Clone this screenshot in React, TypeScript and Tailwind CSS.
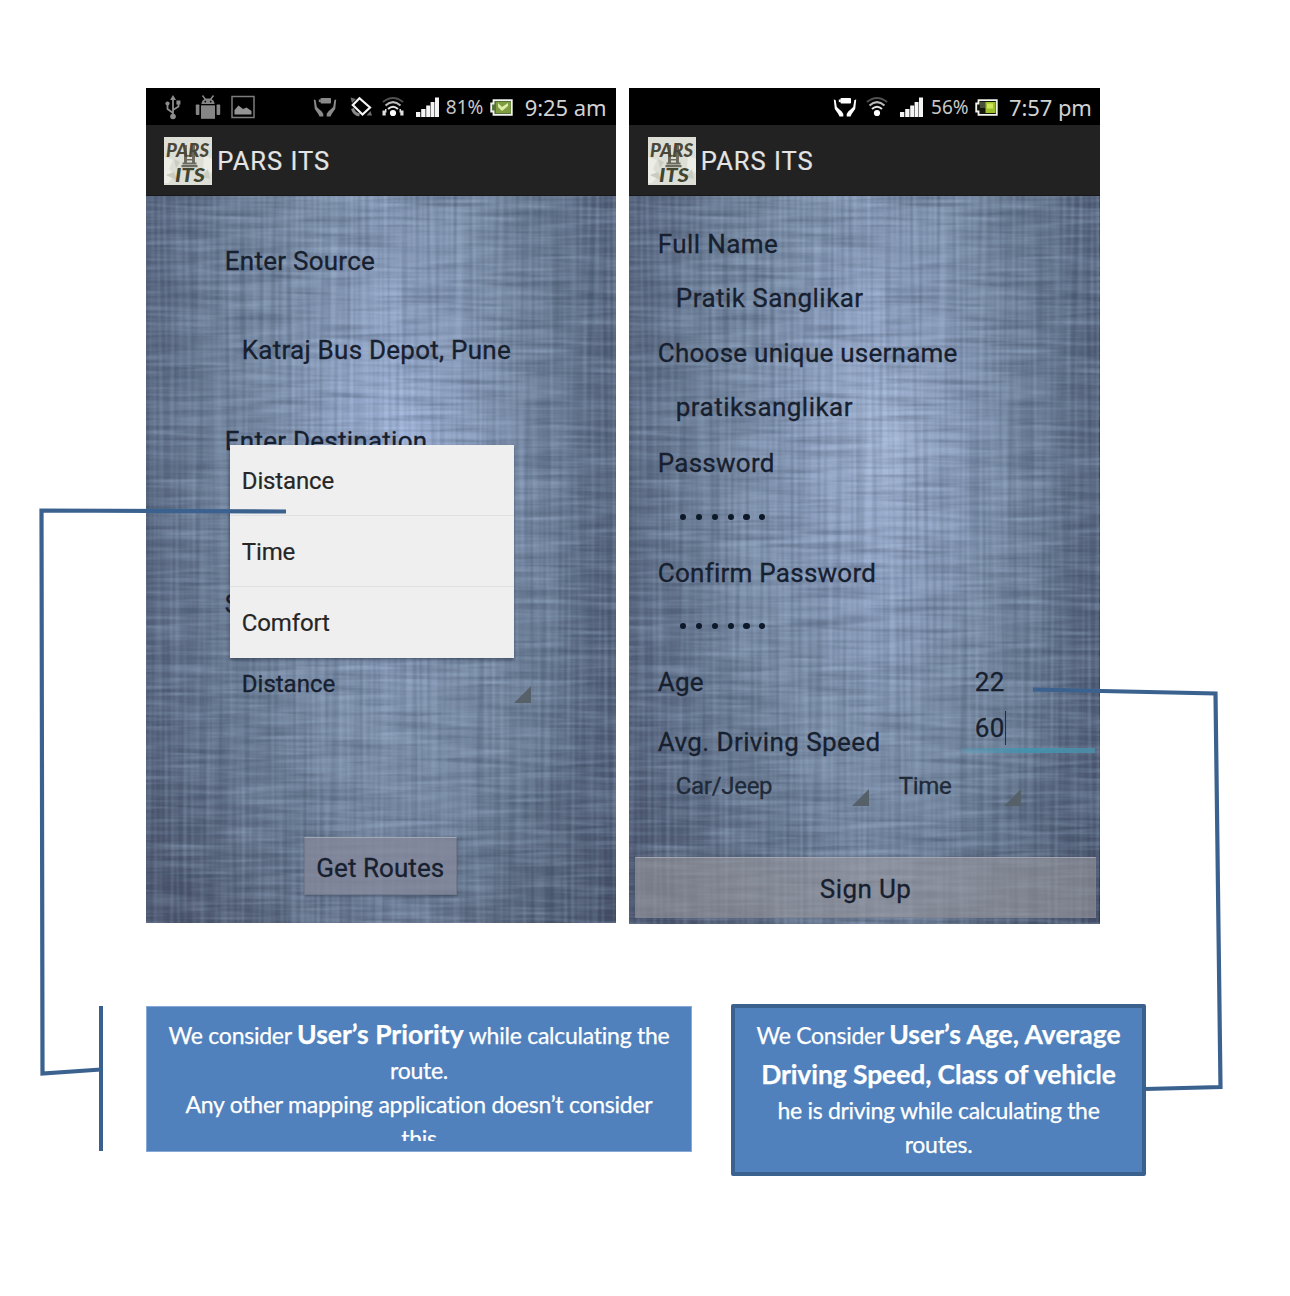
import React from 'react';

type ChildrenProps = { children: React.ReactNode };

/* ---------- Status bar icons ---------- */

function UsbIcon() {
  return (
    <svg className="h-[26px] w-[18px]" viewBox="0 0 18 26" fill="none" stroke="#8d8d8d" strokeWidth="1.8">
      <path d="M9 4v19M9 19l-5.500-4v-4M9 16l5.500-3.500V9" />
      <path d="M6 6l3-5 3 5z" fill="#8d8d8d" stroke="none" />
      <circle cx="9" cy="22.500" r="2.800" fill="#8d8d8d" stroke="none" />
      <circle cx="3.500" cy="9.500" r="2.100" fill="#8d8d8d" stroke="none" />
      <rect x="12.400" y="6.500" width="4" height="4" fill="#8d8d8d" stroke="none" />
    </svg>
  );
}

function AndroidIcon() {
  return (
    <svg className="h-[26px] w-[26px]" viewBox="0 0 26 26" fill="#858585">
      <path d="M6.500 10C6.500 6.500 9 4.500 13 4.500s6.500 2 6.500 5.500z" />
      <path d="M7.500 1.500l3 4M18.500 1.500l-3 4" stroke="#858585" strokeWidth="1.500" />
      <circle cx="10.300" cy="7.600" r="0.900" fill="#000" />
      <circle cx="15.700" cy="7.600" r="0.900" fill="#000" />
      <rect x="6" y="11.300" width="14" height="13.500" />
      <rect x="0.800" y="10.500" width="3.600" height="10.500" rx="0.800" />
      <rect x="21.600" y="10.500" width="3.600" height="10.500" rx="0.800" />
    </svg>
  );
}

function PictureIcon() {
  return (
    <svg className="h-[24px] w-[24px]" viewBox="0 0 24 24">
      <rect x="1" y="1.500" width="22" height="21" fill="none" stroke="#7c7c7c" strokeWidth="1.500" />
      <path d="M3.500 19.500v-4.500l4-4.500 4.500 3.500 3.500-1.500 5 3.500v3.500z" fill="#949494" />
    </svg>
  );
}

function CareIcon({ dim = false }: { dim?: boolean }) {
  return (
    <svg className={dim ? 'h-[22px] w-[24px] text-[#8a8a8a]' : 'h-[22px] w-[24px] text-white'} viewBox="0 0 24 22" fill="currentColor">
      <rect x="7.500" y="2" width="10.500" height="5.500" rx="0.800" />
      <rect x="5.800" y="3.500" width="2" height="2.600" />
      <path d="M0.800 3.500L2.600 4l1.200 7 2.700 2.500 2.200 2 1.600 2.500v2.500H6.500l-1.200-2.500L1.800 13z" />
      <path d="M23.200 3.500L21.400 4l-1.200 7-2.700 2.500-2.200 2-1.600 2.500v2.500h3.800l1.200-2.500L22.200 13z" />
    </svg>
  );
}

function RotateIcon() {
  return (
    <svg className="h-[24px] w-[24px]" viewBox="0 0 24 24" fill="none">
      <path d="M1.500 2.500l5.500 1.500L3 8zM23 20.500l-5.500 0 4-4.500z" fill="#6d6d6d" />
      <path d="M3.500 13.500q1.500 5.500 7 6.500" stroke="#8a8a8a" strokeWidth="3" />
      <path d="M10.500 3.200L21 12.500 13.500 19.500 3.800 10z" stroke="#f6f6f6" strokeWidth="2.200" />
    </svg>
  );
}

function WifiIcon({ hotspot = false }: { hotspot?: boolean }) {
  return (
    <svg className="h-[22px] w-[22px]" viewBox="0 0 22 22" fill="none" strokeWidth="2">
      <path d="M1 6Q11-2 21 6" stroke="#505050" />
      <path d="M3.500 9.500Q11 2.800 18.500 9.500" stroke="#bbb" />
      <path d="M6 13Q11 8.500 16 13" stroke="#e6e6e6" />
      <circle cx="11" cy="17" r="3.100" fill="#fff" />
      {hotspot && (
        <g fill="#e0e0e0">
          <rect x="0.500" y="14.500" width="3.200" height="5" />
          <rect x="18.300" y="14.500" width="3.200" height="5" />
          <rect x="3" y="13" width="1.500" height="3.500" />
          <rect x="17.500" y="13" width="1.500" height="3.500" />
        </g>
      )}
    </svg>
  );
}

function SignalIcon() {
  return (
    <svg className="h-[20px] w-[23px]" viewBox="0 0 23 20" fill="#f4f4f4">
      <rect x="0" y="15" width="4.300" height="5" />
      <rect x="5.200" y="12" width="4.300" height="8" />
      <rect x="10.200" y="8.500" width="4" height="11.500" />
      <rect x="14.600" y="5" width="3.900" height="15" />
      <rect x="19" y="0.500" width="4" height="19.500" />
    </svg>
  );
}

function BatteryIcon({ charging = false }: { charging?: boolean }) {
  return (
    <svg className="h-[17px] w-[23px]" viewBox="0 0 23 17">
      <path d="M3.500 1.200h18.300v14.600H3.500v-3.300H1.200v-8h2.300z" fill={charging ? '#55703a' : '#14160c'} stroke="#f2f2ee" strokeWidth="1.800" />
      {charging ? (
        <g>
          <rect x="6" y="3" width="14.500" height="11" fill="#7f9d3f" />
          <path d="M8 4l4 4 6-4v3l-6 5-4-4z" fill="#e0edaa" />
        </g>
      ) : (
        <g>
          <rect x="5" y="3" width="6" height="6" fill="#4a4f3a" />
          <rect x="10.500" y="3" width="10.100" height="11" fill="#9cc02c" />
          <rect x="12" y="4.500" width="6" height="5" fill="#d0e45c" />
        </g>
      )}
    </svg>
  );
}

/* ---------- Brand and backdrop ---------- */

function AppLogo() {
  return (
    <svg className="h-[48px] w-[48px] shrink-0" viewBox="0 0 48 48">
      <rect width="48" height="48" fill="#dddfd6" />
      <path d="M0 20l9 3-4 9 6 6-7 8H0zM40 18l8 4v14l-9-4z" fill="#eceee6" />
      <path d="M10 22l6 3-4 6zM2 38l8-3 4 9zM38 40l6-8 2 10z" fill="#c9ccbf" />
      <path d="M20 8h3v19h-3zM28 8h3v19h-3zM18.500 25.500h14v2h-14zM17.500 28h16v2.200h-16zM23 18h5v1.600h-5zM23 22h5v1.600h-5z" fill="#6d6b5f" />
      <text x="2" y="19.500" fontFamily="Lato, sans-serif" fontWeight="900" fontStyle="italic" fontSize="19" textLength="43" lengthAdjust="spacingAndGlyphs" fill="#4b4738">PARS</text>
      <text x="11" y="44.500" fontFamily="Lato, sans-serif" fontWeight="900" fontStyle="italic" fontSize="19" textLength="30" lengthAdjust="spacingAndGlyphs" fill="#3f4530">ITS</text>
    </svg>
  );
}

/* Brushed metal: soft central highlight with crossed horizontal and vertical fibres. */
function BrushedBackdrop({ id, light }: { id: string; light: string }) {
  return (
    <svg className="absolute inset-0 h-full w-full" viewBox="0 0 470 728" preserveAspectRatio="none">
      <defs>
        <radialGradient id={`${id}-glow`} cx="0.54" cy="0.34" r="0.76">
          <stop offset="0" stopColor={light} />
          <stop offset="0.25" stopColor="#8b9dbc" />
          <stop offset="0.55" stopColor="#7688a0" />
          <stop offset="0.8" stopColor="#64738b" />
          <stop offset="1" stopColor="#4f586d" />
        </radialGradient>
        <linearGradient id={`${id}-edge`}>
          <stop offset="0" stopColor="#434c68" stopOpacity="0.5" />
          <stop offset="0.25" stopColor="#4a5670" stopOpacity="0.080" />
          <stop offset="0.52" stopColor="#b4c6f0" stopOpacity="0.160" />
          <stop offset="0.76" stopColor="#4a5a70" stopOpacity="0.160" />
          <stop offset="1" stopColor="#3c4560" stopOpacity="0.62" />
        </linearGradient>
        <filter id={`${id}-h`} x="0" y="0" width="1" height="1" colorInterpolationFilters="sRGB">
          <feTurbulence type="fractalNoise" baseFrequency="0.012 0.19" numOctaves="2" seed="4" />
          <feColorMatrix values="0 0 0 0 0.22  0 0 0 0 0.28  0 0 0 0 0.37  1.2 0 0 0 -0.48" />
        </filter>
        <filter id={`${id}-hl`} x="0" y="0" width="1" height="1" colorInterpolationFilters="sRGB">
          <feTurbulence type="fractalNoise" baseFrequency="0.014 0.2" numOctaves="2" seed="19" />
          <feColorMatrix values="0 0 0 0 0.72  0 0 0 0 0.81  0 0 0 0 0.92  1.1 0 0 0 -0.42" />
        </filter>
        <filter id={`${id}-v`} x="0" y="0" width="1" height="1" colorInterpolationFilters="sRGB">
          <feTurbulence type="fractalNoise" baseFrequency="0.26 0.005" numOctaves="1" seed="11" />
          <feColorMatrix values="0 0 0 0 0.22  0 0 0 0 0.29  0 0 0 0 0.37  0.9 0 0 0 -0.35" />
        </filter>
        <filter id={`${id}-vl`} x="0" y="0" width="1" height="1" colorInterpolationFilters="sRGB">
          <feTurbulence type="fractalNoise" baseFrequency="0.24 0.006" numOctaves="1" seed="31" />
          <feColorMatrix values="0 0 0 0 0.7  0 0 0 0 0.8  0 0 0 0 0.9  0.9 0 0 0 -0.36" />
        </filter>
      </defs>
      <rect width="470" height="728" fill={`url(#${id}-glow)`} />
      <rect width="470" height="728" fill={`url(#${id}-edge)`} />
      <rect width="470" height="728" filter={`url(#${id}-h)`} opacity="0.68" />
      <rect width="470" height="728" filter={`url(#${id}-hl)`} opacity="0.6" />
      <rect width="470" height="728" filter={`url(#${id}-v)`} opacity="0.65" />
      <rect width="470" height="728" filter={`url(#${id}-vl)`} opacity="0.6" />
    </svg>
  );
}

function SpinnerCorner() {
  return (
    <svg className="h-[17px] w-[17px]" viewBox="0 0 17 17">
      <path d="M17 0v17H0z" fill="#566069" />
    </svg>
  );
}

/* ---------- Phone parts ---------- */

function TitleBar() {
  return (
    <div className="flex h-[71px] items-center gap-[5px] border-b border-[#181818] bg-[#222222] pl-[18.500px] pt-[2px]">
      <AppLogo />
      <span className="pt-px text-[25.500px] tracking-[1px] text-[#e4e4e4] [-webkit-text-stroke:0.2px]">PARS ITS</span>
    </div>
  );
}

function Clock({ children }: ChildrenProps) {
  return <span className="whitespace-nowrap font-['Noto_Sans'] text-[22px] leading-none tracking-[-0.1px] text-[#d2d2d2]">{children}</span>;
}

function Percent({ children }: ChildrenProps) {
  return <span className="w-[38px] whitespace-nowrap font-['Noto_Sans'] text-[19px] leading-none text-[#c8c8c8]">{children}</span>;
}

function RoutePhone() {
  const options = ['Distance', 'Time', 'Comfort'];
  return (
    <section className="relative flex h-[835px] w-[470px] flex-col bg-black">
      <div className="flex h-[37px] shrink-0 items-center pl-[18px] pr-[8px] pt-px">
        <UsbIcon />
        <div className="ml-[13px]"><AndroidIcon /></div>
        <div className="ml-[10px]"><PictureIcon /></div>
        <div className="ml-[58px]"><CareIcon dim /></div>
        <div className="ml-[12px]"><RotateIcon /></div>
        <div className="ml-[9px]"><WifiIcon hotspot /></div>
        <div className="ml-[12px]"><SignalIcon /></div>
        <div className="ml-[7px] flex pt-px"><Percent>81%</Percent></div>
        <div className="ml-[6px]"><BatteryIcon charging /></div>
        <div className="ml-[12px] flex"><Clock>9:25 am</Clock></div>
      </div>
      <TitleBar />
      <div className="relative flex-1 overflow-hidden">
        <BrushedBackdrop id="route" light="#a4b7de" />
        <div className="relative flex flex-col pl-[79px] pt-[20px] text-[26px] tracking-[0.25px] text-[#17202f] [-webkit-text-stroke:0.3px]">
          <p className="flex h-[90px] items-center">Enter Source</p>
          <p className="flex h-[89px] items-center pl-[17px]">Katraj Bus Depot, Pune</p>
          <p className="flex h-[92px] items-center">Enter Destination</p>
          <p className="mt-[77px] flex h-[80px] items-center">S</p>
          <div className="flex h-[72px] w-[308px] items-center justify-between pl-[17px] pt-[8px] text-[24px] tracking-[0px]">
            <span>Distance</span>
            <div className="mr-[2px] mt-[20px]"><SpinnerCorner /></div>
          </div>
          <button className="ml-[79px] mt-[121px] h-[58px] w-[153px] border border-[#70788c] border-t-[#a3a7b4] bg-[#85889b]/80 pt-[5px] tracking-[0.05px] shadow-[1px_2px_2px_rgba(40,50,70,0.35)]">
            Get Routes
          </button>
        </div>
      </div>
      <ul className="absolute left-[84px] top-[356.500px] w-[284px] bg-[#efefef] shadow-[0_2px_3px_rgba(20,30,50,0.5)]">
        {options.map((option) => (
          <li key={option} className="flex h-[71px] items-center border-b border-[#e0e0e0] pl-[12px] pt-[2px] text-[24px] tracking-[-0.15px] text-[#262626] [-webkit-text-stroke:0.2px] last:border-0">
            {option}
          </li>
        ))}
      </ul>
    </section>
  );
}

function PasswordDots() {
  return (
    <div className="flex h-[55px] items-center gap-[9.600px] pb-[3px] pl-[22.500px]">
      {[0, 1, 2, 3, 4, 5].map((dot) => (
        <i key={dot} className="size-[6.200px] rounded-full bg-[#0d1828]" />
      ))}
    </div>
  );
}

function SignUpPhone() {
  return (
    <section className="flex h-[836px] w-[470.500px] flex-col bg-black">
      <div className="flex h-[37px] shrink-0 items-center justify-end pr-[8px] pt-px">
        <CareIcon />
        <div className="ml-[9px]"><WifiIcon /></div>
        <div className="ml-[12px]"><SignalIcon /></div>
        <div className="ml-[8px] flex pt-px"><Percent>56%</Percent></div>
        <div className="ml-[6px]"><BatteryIcon /></div>
        <div className="ml-[11px] flex"><Clock>7:57 pm</Clock></div>
      </div>
      <TitleBar />
      <div className="relative flex-1 overflow-hidden">
        <BrushedBackdrop id="signup" light="#a9bad8" />
        <div className="relative flex h-full flex-col text-[26px] tracking-[0.25px] text-[#17202f] [-webkit-text-stroke:0.3px]">
          <div className="flex flex-col pl-[28.500px] pt-[21px]">
            <p className="flex h-[54px] items-center tracking-[0.4px]">Full Name</p>
            <p className="flex h-[54px] items-center pl-[18px] tracking-[0.45px]">Pratik Sanglikar</p>
            <p className="flex h-[56px] items-center">Choose unique username</p>
            <p className="flex h-[53px] items-center pl-[18px] tracking-[0.45px]">pratiksanglikar</p>
            <p className="flex h-[57px] items-center pt-px">Password</p>
            <PasswordDots />
            <p className="flex h-[54px] items-center">Confirm Password</p>
            <PasswordDots />
            <div className="flex h-[54px] items-center">
              <span className="w-[317px]">Age</span>
              <span>22</span>
            </div>
            <div className="flex h-[53px]">
              <span className="w-[303px] pt-[14px] tracking-[0.4px]">Avg. Driving Speed</span>
              <div className="flex h-[44px] w-[134px] flex-col justify-between">
                <div className="flex h-[38px] items-center pl-[14px]">
                  <span>60</span>
                  <i className="h-[34px] w-[1.500px] bg-[#26303c]" />
                </div>
                <i className="h-[5px] shrink-0 bg-gradient-to-r from-[#5c9fba]/40 via-[#4193b0]/90 to-[#4a90a8]/80" />
              </div>
            </div>
          </div>
          <div className="flex h-[58px] pl-[46.500px] text-[24px] tracking-[-0.3px] text-[#202a38]">
            <span className="w-[176px] pt-[6px]">Car/Jeep</span>
            <div className="pt-[27px]"><SpinnerCorner /></div>
            <span className="w-[135px] pl-[30px] pt-[6px]">Time</span>
            <div className="pt-[27px]"><SpinnerCorner /></div>
          </div>
          <button className="mb-[6px] ml-[6px] mr-[4px] mt-auto h-[61px] border border-[#7c8291] border-t-[#a2a6b0] bg-[#9b9a9f]/60 pt-[4px] tracking-[0.4px]">
            Sign Up
          </button>
        </div>
      </div>
    </section>
  );
}

/* ---------- Page ---------- */

export default function App() {
  return (
    <main className="relative h-[1296px] w-[1290px] overflow-hidden bg-white font-['Roboto',sans-serif]">
      <div className="flex items-start gap-[13.500px] pl-[145.800px] pt-[88px]">
        <RoutePhone />
        <SignUpPhone />
      </div>

      <div className="mt-[80px] flex items-start pl-[99px] text-center font-['Lato',sans-serif] text-[23px] tracking-[-0.25px] text-white [-webkit-text-stroke:0.25px]">
        <div className="mt-[2px] h-[145px] w-[4px] bg-[#3a6090]" />
        <div className="ml-[43px] mt-[2px] h-[146px] w-[546px] whitespace-nowrap border border-[#86a9d6] bg-[#5081bc] pt-[9px]">
          <div className="h-[125px] overflow-hidden">
            <p className="h-[37px] leading-[37px]">
              We consider <b className="text-[26.500px] tracking-[0px]">User’s Priority</b> while calculating the
            </p>
            <p className="h-[34px] leading-[35px]">route.</p>
            <p className="h-[34px] leading-[35px]">Any other mapping application doesn’t consider</p>
            <p className="h-[34px] leading-[35px]">this</p>
          </div>
        </div>
        <div className="ml-[39px] h-[172px] w-[415px] whitespace-nowrap rounded-[2px] border-[4px] border-[#3b628f] bg-[#5081bc] pt-[6px]">
          <p className="h-[40px] leading-[40px]">
            We Consider <b className="text-[26.500px] tracking-[0px]">User’s Age, Average</b>
          </p>
          <p className="h-[39px] text-[26.500px] leading-[40px] tracking-[-0.1px]"><b>Driving Speed, Class of vehicle</b></p>
          <p className="h-[34px] leading-[35px] tracking-[-0.3px]">he is driving while calculating the</p>
          <p className="h-[34px] leading-[35px]">routes.</p>
        </div>
      </div>

      {/* Callout connectors */}
      <svg className="pointer-events-none absolute inset-0 h-full w-full" viewBox="0 0 1290 1296" fill="none" stroke="#3b628f" strokeWidth="4.200" strokeLinejoin="miter">
        <path d="M286 511.500L41.500 510.500 42.500 1073.500 101 1069.500" />
        <path d="M1033 689.500L1215.500 693.500 1220.500 1087 1145 1089" />
      </svg>
    </main>
  );
}
